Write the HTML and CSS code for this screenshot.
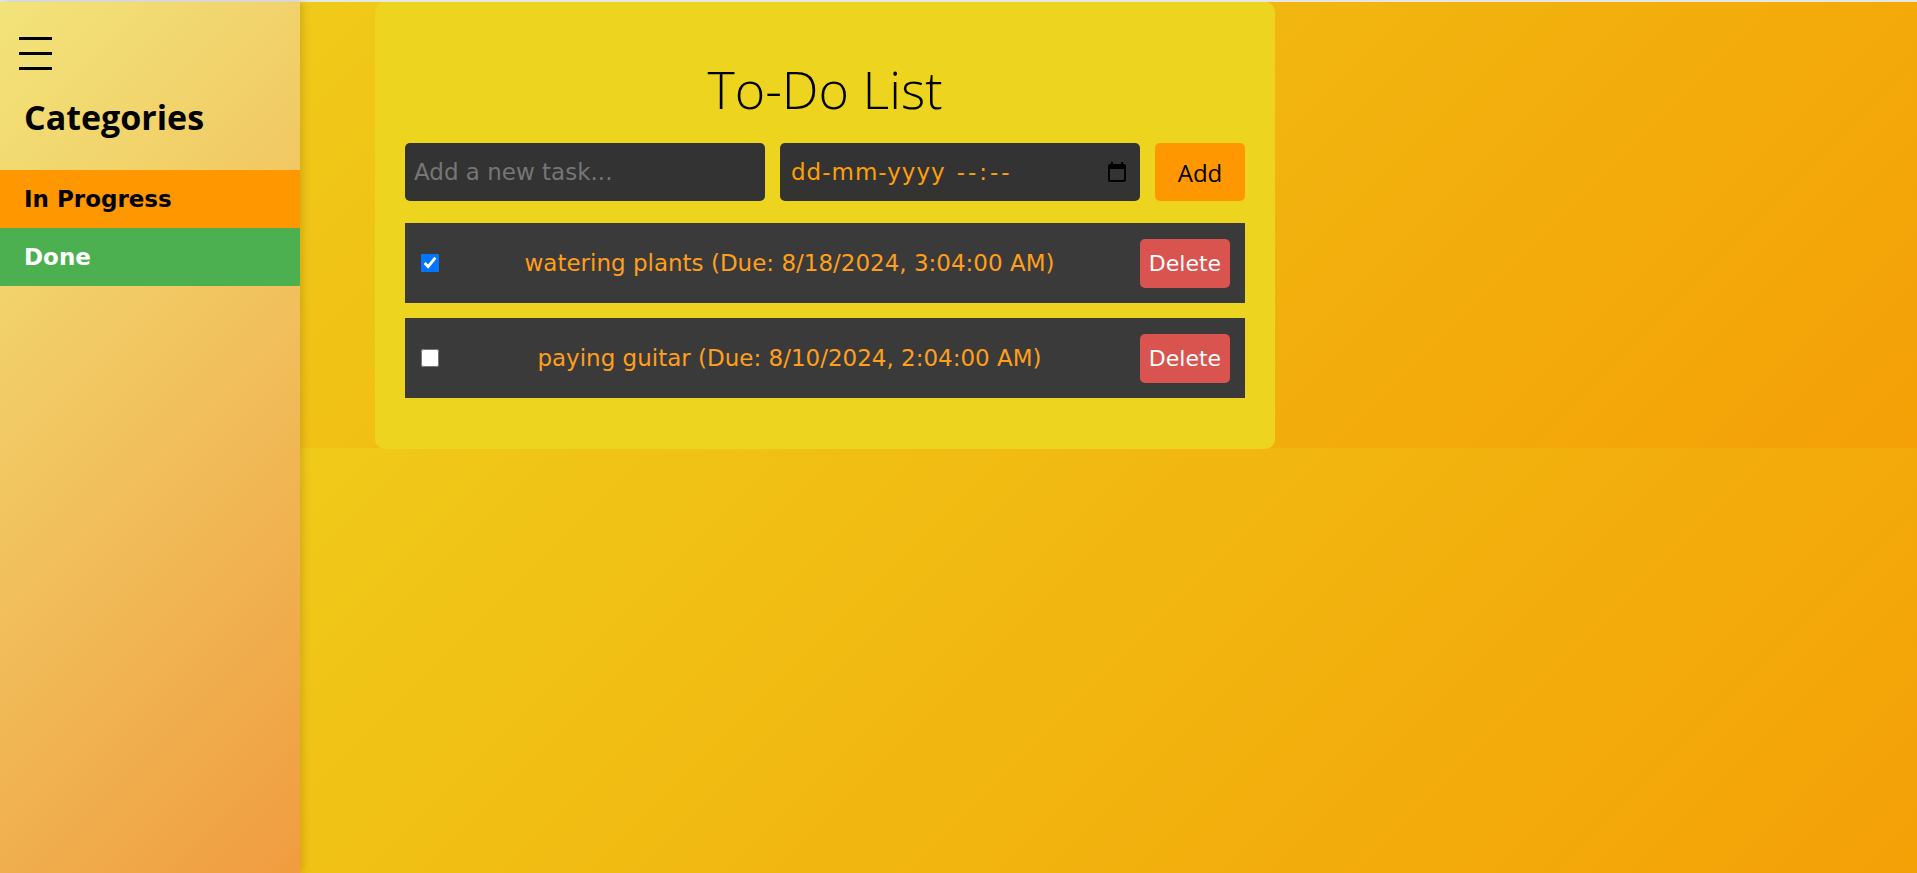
FILE: index.html
```html
<!DOCTYPE html>
<html lang="en">
<head>
<meta charset="utf-8">
<title>To-Do List</title>
<link rel="stylesheet" href="styles.css">
</head>
<body>
<div class="topline"></div>
<div class="layout">
  <aside class="sidebar">
    <div class="menu-btn"><span></span><span></span><span></span></div>
    <h2 class="side-title">Categories</h2>
    <div class="cat cat-progress">In Progress</div>
    <div class="cat cat-done">Done</div>
  </aside>
  <main class="main">
    <section class="card">
      <h1 class="title">To-Do List</h1>
      <div class="add-row">
        <input class="field task-input" type="text" placeholder="Add a new task...">
        <div class="field date-field">
          <span class="date-text">dd-mm-yyyy</span><span class="time-text">--:--</span>
          <svg class="cal-icon" viewBox="0 0 24 24" width="24" height="24" aria-hidden="true"><path d="M19 4h-1V2h-2v2H8V2H6v2H5c-1.1 0-2 .9-2 2v14c0 1.1.9 2 2 2h14c1.1 0 2-.9 2-2V6c0-1.1-.9-2-2-2zm0 16H5V9h14v11z" fill="#000"/></svg>
        </div>
        <button class="add-btn">Add</button>
      </div>
      <ul class="tasks">
        <li class="task">
          <input class="check" type="checkbox" checked>
          <span class="task-text">watering plants (Due: 8/18/2024, 3:04:00 AM)</span>
          <button class="del-btn">Delete</button>
        </li>
        <li class="task">
          <input class="check" type="checkbox">
          <span class="task-text">paying guitar (Due: 8/10/2024, 2:04:00 AM)</span>
          <button class="del-btn">Delete</button>
        </li>
      </ul>
    </section>
  </main>
</div>
</body>
</html>
```

FILE: styles.css
```css
html {
  background: linear-gradient(135deg, #efd01c, #f4a006) 0 0 / 100% 448px repeat;
}

body {
  margin: 0;
  font-family: "DejaVu Sans", Verdana, sans-serif;
}

.topline {
  height: 2px;
  background: #e6e6e6;
}

.layout {
  display: flex;
  height: 871px;
}

.sidebar {
  width: 300px;
  flex-shrink: 0;
  display: flex;
  flex-direction: column;
  background: linear-gradient(135deg, #f2e47a, #f09c3f);
  box-shadow: 3px 0 7px rgba(120, 90, 0, 0.25);
  position: relative;
  z-index: 1;
}

.menu-btn {
  display: flex;
  flex-direction: column;
  gap: 12px;
  width: 33px;
  margin: 35px 0 0 19px;
}

.menu-btn span {
  display: block;
  height: 3px;
  background: #000;
}

.side-title {
  margin: 24px 0 30px 24px;
  font-family: "Open Sans", sans-serif;
  font-weight: 700;
  font-size: 34px;
  line-height: 46px;
  color: #000;
}

.cat {
  height: 58px;
  display: flex;
  align-items: center;
  padding-left: 24px;
  font-family: "DejaVu Sans", Verdana, sans-serif;
  font-weight: 700;
  font-size: 23px;
}

.cat-progress {
  background: #ff9800;
  color: #000;
}

.cat-done {
  background: #4caf50;
  color: #fff;
}

.main {
  flex: 1;
  padding-left: 75px;
}

.card {
  width: 900px;
  box-sizing: border-box;
  padding: 30px;
  background: #edd51f;
  border-radius: 10px;
}

.title {
  margin: 22px 0 19px;
  text-align: center;
  font-family: "Open Sans", sans-serif;
  font-weight: 300;
  font-size: 52px;
  line-height: 70px;
  color: #000;
}

.add-row {
  display: flex;
  gap: 15px;
  height: 58px;
}

.field {
  flex: none;
  width: 360px;
  box-sizing: border-box;
  height: 58px;
  border: none;
  border-radius: 5px;
  background: #333;
  font-family: "DejaVu Sans", Verdana, sans-serif;
  font-size: 23px;
  outline: none;
}

.task-input {
  padding: 0 9px;
  color: #ddd;
}

.task-input::placeholder {
  color: #767676;
}

.date-field {
  display: flex;
  align-items: center;
  padding: 0 11px;
  color: #ff9f0a;
}

.date-text {
  letter-spacing: 1px;
}

.time-text {
  margin-left: 11px;
  letter-spacing: 3px;
}

.cal-icon {
  margin-left: auto;
  width: 24px;
  height: 24px;
}

.add-btn {
  flex: none;
  width: 90px;
  height: 58px;
  border: none;
  border-radius: 5px;
  background: #ff9800;
  color: #000;
  font-family: "Open Sans", sans-serif;
  font-size: 24px;
  padding: 0;
}

.tasks {
  list-style: none;
  margin: 22px 0 21px;
  padding: 0;
  display: flex;
  flex-direction: column;
  gap: 15px;
}

.task {
  height: 80px;
  display: flex;
  align-items: center;
  padding: 0 15px 0 16px;
  background: #3a3a3a;
}

.check {
  width: 18px;
  height: 18px;
  margin: 0;
  flex-shrink: 0;
}

.task-text {
  flex: 1;
  text-align: center;
  color: #ff9f1c;
  font-family: "DejaVu Sans", Verdana, sans-serif;
  font-size: 23px;
}

.del-btn {
  width: 90px;
  height: 49px;
  border: none;
  border-radius: 5px;
  background: #d9534f;
  color: #fff;
  font-family: "DejaVu Sans", Verdana, sans-serif;
  font-size: 22px;
  padding: 0;
}
```
